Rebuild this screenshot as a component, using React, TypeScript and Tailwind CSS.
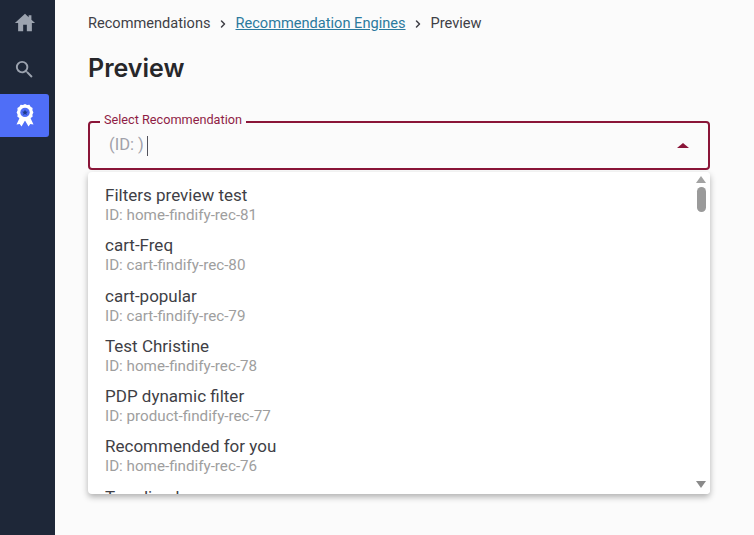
import { ChevronRight } from "lucide-react";

const options = [
  { name: "Filters preview test", id: "home-findify-rec-81" },
  { name: "cart-Freq", id: "cart-findify-rec-80" },
  { name: "cart-popular", id: "cart-findify-rec-79" },
  { name: "Test Christine", id: "home-findify-rec-78" },
  { name: "PDP dynamic filter", id: "product-findify-rec-77" },
  { name: "Recommended for you", id: "home-findify-rec-76" },
  { name: "Trending home", id: "home-findify-rec-75" },
];

function HomeIcon() {
  return (
    <svg width="22" height="22" viewBox="0 0 24 24" fill="#9ca3af">
      <path d="M10 21v-7h4v7h5.5v-9H23L19 8.400V3.500h-3v2.200L12 2 1 12h3.5v9z" />
    </svg>
  );
}

function SearchIcon() {
  return (
    <svg width="23" height="23" viewBox="0 0 24 24" fill="#9ca3af">
      <path d="M15.5 14h-.79l-.28-.27A6.47 6.47 0 0 0 16 9.5 6.5 6.5 0 1 0 9.5 16c1.61 0 3.09-.59 4.23-1.57l.27.28v.79l5 4.99L20.490 19l-4.990-5zm-6 0C7.010 14 5 11.990 5 9.500S7.010 5 9.500 5 14 7.010 14 9.500 11.990 14 9.500 14z" />
    </svg>
  );
}

function AwardIcon() {
  return (
    <svg width="18" height="23" viewBox="0 0 18 23" fill="#ffffff">
      {/* ribbon tails */}
      <path d="M4.500 12 .5 20.500l3.200-.6L5.500 22.500 9 16.500l3.500 6 1.800-2.600 3.200.6L13.500 12z" />
      {/* rosette */}
      <path d="M9 0l2.100 1 2.300-.2 1.200 2 2 1.200-.2 2.300 1 2.100-1 2.100.2 2.300-2 1.200-1.200 2-2.300-.2-2.100 1-2.100-1-2.300.2-1.200-2-2-1.200.2-2.300-1-2.100 1-2.100-.2-2.300 2-1.200 1.200-2 2.300.2z" />
      <circle cx="9" cy="8.400" r="4.700" fill="#4f6ef7" />
      <path d="M9 5.600l.9 1.900 2 .2-1.500 1.400.4 2L9 10.100l-1.800 1 .4-2-1.500-1.400 2-.2z" fill="#1e3a8a" />
    </svg>
  );
}

export default function App() {
  return (
    <div className="flex h-[535px] w-[754px] overflow-hidden bg-[#fbfbfb] font-['Roboto',sans-serif]">
      <aside className="flex w-[55px] shrink-0 flex-col bg-[#1e2738] pr-[6px]">
        <div className="flex h-[45px] items-center justify-center">
          <HomeIcon />
        </div>
        <div className="flex h-[49px] items-center justify-center">
          <SearchIcon />
        </div>
        <div className="flex h-[43px] items-center justify-center rounded-r-[3px] bg-[#4f6ef7]">
          <AwardIcon />
        </div>
      </aside>

      <main className="min-w-0 flex-1 pl-[33px] pr-[44px] pt-[15px]">
        <nav className="flex h-[18px] items-center text-[14.600px] text-[#3f3f46]">
          <span>Recommendations</span>
          <ChevronRight size={12} strokeWidth={3} className="mx-[6.500px]" />
          <a className="text-[#2b7a9e] underline">Recommendation Engines</a>
          <ChevronRight size={12} strokeWidth={3} className="mx-[6.500px]" />
          <span>Preview</span>
        </nav>

        <h1 className="mt-[9px] h-[52px] font-['Inter',sans-serif] text-[25px] font-semibold leading-[52px] text-[#27272a]">
          Preview
        </h1>

        <div className="relative mt-[27px] w-[622px]">
          <span className="absolute -top-[9px] left-[12px] bg-[#fbfbfb] px-[4px] text-[12.700px] leading-[16px] text-[#8f1d45]">
            Select Recommendation
          </span>
          <div className="flex h-[49px] items-center justify-between rounded-[4px] border-2 border-[#8a1538] pl-[19px] pr-[19px]">
            <div className="flex items-center text-[16.500px] text-[#a1a1aa]">
              (ID: )
              <span className="ml-[3px] h-[20px] w-px bg-[#52525b]" />
            </div>
            <span className="h-0 w-0 border-x-[6px] border-b-[5px] border-x-transparent border-b-[#8a1538]" />
          </div>

          <div className="absolute left-0 top-[51px] h-[322px] w-[622px] overflow-hidden rounded-[4px] bg-white pt-[1px] shadow-[0_3px_6px_rgba(0,0,0,0.3)]">
            {options.map((o) => (
              <div key={o.id} className="h-[50.300px] px-[17px] pt-[12px]">
                <div className="text-[17px] leading-[20px] text-[#3f3f46]">{o.name}</div>
                <div className="text-[15.200px] leading-[20px] text-[#9e9e9e]">ID: {o.id}</div>
              </div>
            ))}
            <div className="absolute bottom-0 right-0 top-0 flex w-[18px] flex-col items-center bg-white pt-[4px]">
              <span className="h-0 w-0 border-x-[5px] border-b-[7px] border-x-transparent border-b-[#a3a3a3]" />
              <span className="mt-[4px] h-[25px] w-[9px] rounded-full bg-[#9a9a9a]" />
              <span className="mb-[6px] mt-auto h-0 w-0 border-x-[5px] border-t-[7px] border-x-transparent border-t-[#8a8a8a]" />
            </div>
          </div>
        </div>
      </main>
    </div>
  );
}
